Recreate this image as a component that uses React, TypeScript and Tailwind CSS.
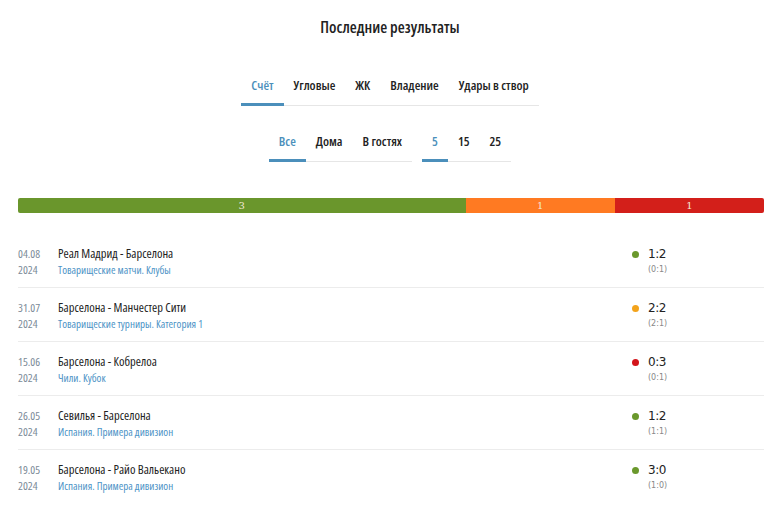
import React from "react";

const matches = [
  { d: "04.08", y: "2024", teams: "Реал Мадрид - Барселона", league: "Товарищеские матчи. Клубы", score: "1:2", half: "(0:1)", c: "bg-[#6a982c]" },
  { d: "31.07", y: "2024", teams: "Барселона - Манчестер Сити", league: "Товарищеские турниры. Категория 1", score: "2:2", half: "(2:1)", c: "bg-[#f3a31b]" },
  { d: "15.06", y: "2024", teams: "Барселона - Кобрелоа", league: "Чили. Кубок", score: "0:3", half: "(0:1)", c: "bg-[#d3141a]" },
  { d: "26.05", y: "2024", teams: "Севилья - Барселона", league: "Испания. Примера дивизион", score: "1:2", half: "(1:1)", c: "bg-[#6a982c]" },
  { d: "19.05", y: "2024", teams: "Барселона - Райо Вальекано", league: "Испания. Примера дивизион", score: "3:0", half: "(1:0)", c: "bg-[#6a982c]" },
];

function Tab({ label, active }: { label: string; active?: boolean }) {
  return (
    <div
      className={
        "px-[10px] pb-[10px] -mb-px border-b-[3px] text-[13px] leading-[16px] font-semibold " +
        (active ? "border-[#4b8fbb] text-[#4b8fbb]" : "border-transparent text-[#222]")
      }
    >
      {label}
    </div>
  );
}

export default function App() {
  const font = { fontFamily: '"Open Sans", sans-serif', fontStretch: "75%" };
  return (
    <div className="w-[780px] h-[518px] bg-white overflow-hidden" style={font}>
      <div className="pt-[18px] text-center text-[16px] leading-[18px] font-semibold text-[#222]">
        Последние результаты
      </div>
      <div className="flex justify-center mt-[41px]">
        <div className="flex border-b border-[#e6e6e6]">
          <Tab label="Счёт" active />
          <Tab label="Угловые" />
          <Tab label="ЖК" />
          <Tab label="Владение" />
          <Tab label="Удары в створ" />
        </div>
      </div>
      <div className="flex justify-center gap-[10px] mt-[27px]">
        <div className="flex border-b border-[#e6e6e6]">
          <Tab label="Все" active />
          <Tab label="Дома" />
          <Tab label="В гостях" />
        </div>
        <div className="flex border-b border-[#e6e6e6]">
          <Tab label="5" active />
          <Tab label="15" />
          <Tab label="25" />
        </div>
      </div>
      <div className="ml-[18px] w-[746px] mt-[36px] flex h-[15px] rounded-[2px] overflow-hidden text-[10px] leading-[15px] text-[#f3e9d8]" style={{ fontFamily: '"DejaVu Serif", serif', fontStretch: "100%" }}>
        <div className="flex-[3] bg-[#6a962c] text-center">3</div>
        <div className="flex-1 bg-[#ff7a22] text-center">1</div>
        <div className="flex-1 bg-[#d31f1a] text-center">1</div>
      </div>
      <div className="ml-[18px] w-[746px] mt-[21px]">
        {matches.map((m, i) => (
          <div key={i} className={"flex pt-[12px] pb-[9px] " + (i < matches.length - 1 ? "border-b border-[#ececec]" : "")}>
            <div className="w-[40px] text-[11.5px] leading-[16px] text-[#7b8a97]" style={{ fontStretch: "85%" }}>
              <div>{m.d}</div>
              <div>{m.y}</div>
            </div>
            <div className="flex-1">
              <div className="text-[12.5px] leading-[16px] text-[#222]">{m.teams}</div>
              <div className="text-[11px] leading-[16px] text-[#4d93c6]" style={{ fontStretch: "78%" }}>{m.league}</div>
            </div>
            <div className="w-[132px] flex">
              <div className={"w-[7px] h-[7px] rounded-full mt-[5px] " + m.c}></div>
              <div className="ml-[9px]" style={{ fontFamily: '"DejaVu Sans", sans-serif', fontStretch: "100%" }}>
                <div className="text-[12px] leading-[16px] tracking-[-0.5px] text-[#222]">{m.score}</div>
                <div className="text-[8px] leading-[16px] text-[#888]">{m.half}</div>
              </div>
            </div>
          </div>
        ))}
      </div>
    </div>
  );
}
